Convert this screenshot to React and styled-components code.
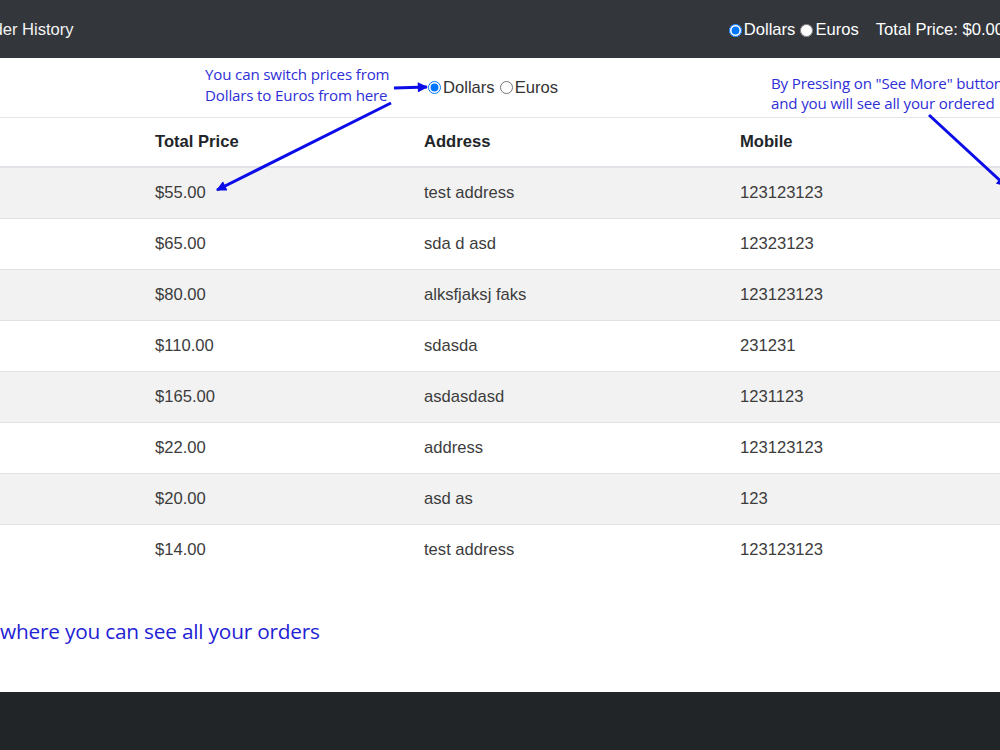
import React, { useState } from "react";
import styled, { createGlobalStyle } from "styled-components";

const GlobalStyle = createGlobalStyle`
	html, body {
		margin: 0;
		padding: 0;
		background: #ffffff;
		overflow: hidden;
	}
	body {
		font-family: "Liberation Sans", Arial, sans-serif;
		color: #212529;
	}
`;

const Page = styled.div`
	position: relative;
	width: 1000px;
	height: 750px;
	overflow: hidden;
	display: flex;
	flex-direction: column;
`;

const NavBar = styled.nav`
	height: 58px;
	box-sizing: border-box;
	padding-top: 2px;
	flex-shrink: 0;
	background: #33373c;
	display: flex;
	align-items: center;
	justify-content: space-between;
	color: #ffffff;
	font-size: 16.6px;
	white-space: nowrap;
`;

const Brand = styled.span`
	margin-left: -25px;
	color: #f4f4f4;
`;

const NavRight = styled.div`
	display: flex;
	align-items: center;
	margin-right: -4px;
`;

const RadioLabel = styled.label`
	display: inline-flex;
	align-items: center;
	font-size: ${(p) => p.$size || "16.6px"};
	color: ${(p) => p.$color || "inherit"};
	cursor: pointer;

	input {
		margin: 0 2px 0 ${(p) => p.$gap || "5px"};
		width: 13px;
		height: 13px;
	}
`;

const TotalPrice = styled.span`
	margin-left: 17px;
`;

const SwitchRow = styled.div`
	height: 59px;
	box-sizing: border-box;
	flex-shrink: 0;
	display: flex;
	align-items: center;
	padding-left: 423px;
`;

const Table = styled.table`
	width: 1000px;
	border-collapse: collapse;
	table-layout: fixed;
	font-size: 16.6px;
`;

const HeadCell = styled.th`
	text-align: left;
	font-weight: bold;
	color: #212529;
	padding: 12px 12px;
	line-height: 24px;
	border-top: 1px solid #e3e5e8;
	border-bottom: 2px solid #e0e2e5;
`;

const Row = styled.tr`
	background: ${(p) => (p.$striped ? "#f2f2f2" : "#ffffff")};
`;

const Cell = styled.td`
	padding: 13px 12px;
	line-height: 24px;
	color: #3c3c3c;
	border-top: ${(p) => (p.$first ? "none" : "1px solid #e0e2e5")};
`;

const Spacer = styled.div`
	flex: 1;
	display: flex;
	align-items: center;
	padding-bottom: 6px;
`;

const Caption = styled.p`
	margin: 0;
	font-family: "Open Sans", "Noto Sans", sans-serif;
	font-size: 20.8px;
	color: #2222d4;
	letter-spacing: -0.2px;
`;

const Footer = styled.footer`
	height: 58px;
	flex-shrink: 0;
	background: #222528;
`;

const Note = styled.div`
	position: absolute;
	left: ${(p) => p.$left}px;
	top: ${(p) => p.$top}px;
	font-family: "Open Sans", "Noto Sans", sans-serif;
	font-size: 15.1px;
	line-height: ${(p) => p.$line || 21}px;
	color: #2e2ed6;
	white-space: nowrap;
	letter-spacing: -0.15px;
`;

const Arrows = styled.svg`
	position: absolute;
	left: 0;
	top: 0;
	pointer-events: none;
`;

const orders = [
	{ price: 55, address: "test address", mobile: "123123123" },
	{ price: 65, address: "sda d asd", mobile: "12323123" },
	{ price: 80, address: "alksfjaksj faks", mobile: "123123123" },
	{ price: 110, address: "sdasda", mobile: "231231" },
	{ price: 165, address: "asdasdasd", mobile: "1231123" },
	{ price: 22, address: "address", mobile: "123123123" },
	{ price: 20, address: "asd as", mobile: "123" },
	{ price: 14, address: "test address", mobile: "123123123" },
];

function CurrencySwitch({ currency, setCurrency, name, size, color }) {
	return (
		<>
			<RadioLabel $size={size} $color={color} $gap="5px">
				<input
					type="radio"
					name={name}
					checked={currency === "USD"}
					onChange={() => setCurrency("USD")}
				/>
				Dollars
			</RadioLabel>
			<RadioLabel $size={size} $color={color} $gap="5px">
				<input
					type="radio"
					name={name}
					checked={currency === "EUR"}
					onChange={() => setCurrency("EUR")}
				/>
				Euros
			</RadioLabel>
		</>
	);
}

export default function App() {
	const [currency, setCurrency] = useState("USD");

	const formatPrice = (value) =>
		currency === "USD"
			? "$" + value.toFixed(2)
			: "€" + (value * 0.92).toFixed(2);

	return (
		<>
			<GlobalStyle />
			<Page>
				<NavBar>
					<Brand>Order History</Brand>
					<NavRight>
						<CurrencySwitch
							name="navCurrency"
							currency={currency}
							setCurrency={setCurrency}
						/>
						<TotalPrice>
							Total Price: {currency === "USD" ? "$0.00" : "€0.00"}
						</TotalPrice>
					</NavRight>
				</NavBar>

				<SwitchRow>
					<CurrencySwitch
						name="tableCurrency"
						currency={currency}
						setCurrency={setCurrency}
						size="16.6px"
						color="#333"
					/>
				</SwitchRow>

				<Table>
					<colgroup>
						<col style={{ width: 143 }} />
						<col style={{ width: 269 }} />
						<col style={{ width: 316 }} />
						<col />
					</colgroup>
					<thead>
						<tr>
							<HeadCell />
							<HeadCell>Total Price</HeadCell>
							<HeadCell>Address</HeadCell>
							<HeadCell>Mobile</HeadCell>
						</tr>
					</thead>
					<tbody>
						{orders.map((order, i) => (
							<Row key={i} $striped={i % 2 === 0}>
								<Cell $first={i === 0} />
								<Cell $first={i === 0}>{formatPrice(order.price)}</Cell>
								<Cell $first={i === 0}>{order.address}</Cell>
								<Cell $first={i === 0}>{order.mobile}</Cell>
							</Row>
						))}
					</tbody>
				</Table>

				<Spacer>
					<Caption>where you can see all your orders</Caption>
				</Spacer>

				<Footer />

				<Note $left={205} $top={64} $line={21}>
					You can switch prices from
					<br />
					Dollars to Euros from here
				</Note>
				<Note $left={771} $top={73} $line={20}>
					By Pressing on "See More" button
					<br />
					and you will see all your ordered
				</Note>

				<Arrows width="1000" height="750" viewBox="0 0 1000 750">
					<defs>
						<marker
							id="head"
							viewBox="0 0 10 10"
							refX="9"
							refY="5"
							markerWidth="4"
							markerHeight="3.4"
							orient="auto"
							markerUnits="strokeWidth"
						>
							<path d="M0 0 L10 5 L0 10 Z" fill="#0c0ce8" />
						</marker>
					</defs>
					<g stroke="#0c0ce8" strokeWidth="3" fill="none">
						<line x1="394" y1="88" x2="427" y2="87" markerEnd="url(#head)" />
						<line x1="391" y1="103" x2="217" y2="190" markerEnd="url(#head)" />
						<line x1="929" y1="115" x2="1006" y2="186" markerEnd="url(#head)" />
					</g>
				</Arrows>
			</Page>
		</>
	);
}
